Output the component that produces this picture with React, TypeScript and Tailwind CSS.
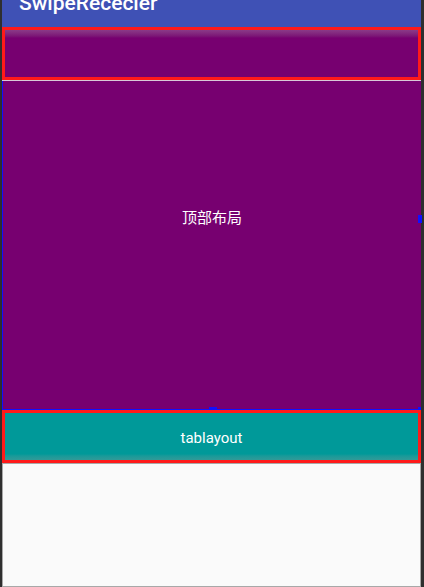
export default function App() {
  return (
    <div
      className="w-[424px] h-[587px] bg-[#2f2f2f] pl-[2px] pr-[3px] flex flex-col overflow-hidden"
      style={{ fontFamily: '"Roboto", "Noto Sans CJK SC", sans-serif' }}
    >
      {/* app bar, title cut off at top */}
      <div className="h-[27px] bg-[#3f51b5] pl-[17px] overflow-hidden shrink-0">
        <p className="text-white text-[21px] font-medium leading-[24px] -mt-[9px]">SwipeRececler</p>
      </div>

      {/* toolbar placeholder */}
      <div className="h-[53px] border-[3px] border-[#ff1a1a] bg-[#770070] relative shrink-0">
        <div className="absolute inset-x-0 top-0 h-[8px] bg-gradient-to-b from-[#8a3a88] to-[#770070]" />
      </div>
      <div className="h-[1px] bg-[#d9c8d8] shrink-0" />

      {/* header (its centre sits behind the toolbar too) */}
      <div className="relative h-[329px] bg-[#770070] border-l-[1px] border-[#1010ff] flex items-center justify-center shrink-0">
        <p className="text-white text-[15px] -translate-y-[27px]">顶部布局</p>
        <div className="absolute right-[-1px] top-[134px] w-[4px] h-[8px] bg-[#1010ff]" />
        <div className="absolute left-[206px] bottom-0 w-[8px] h-[3px] bg-[#1010ff]" />
        <div className="absolute left-0 right-0 bottom-0 h-[1px] bg-[#1010ff]" />
        <div className="absolute right-0 bottom-0 w-[3px] h-[3px] bg-[#1010ff]" />
      </div>

      {/* tab layout */}
      <div className="relative h-[53px] border-[3px] border-[#ff1a1a] bg-[#009999] flex items-center justify-center shrink-0">
        <p className="text-white text-[15px] mt-[3px]">tablayout</p>
        <div className="absolute inset-x-0 bottom-0 h-[6px] bg-gradient-to-b from-[#009999] to-[#2f9a98]" />
      </div>

      {/* content */}
      <div className="flex-1 bg-[#fafafa] border-[1px] border-[#a8a8a8]" />
    </div>
  );
}
